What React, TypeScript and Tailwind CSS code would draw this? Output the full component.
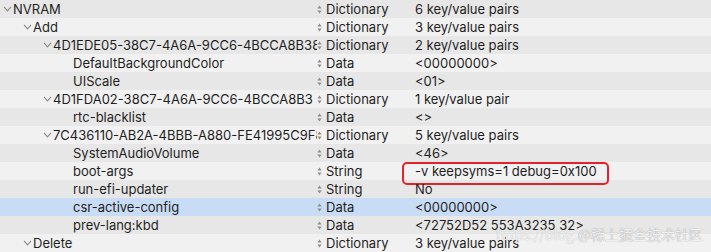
import React from 'react'

type Row = {
  level: number
  key: string
  type: string
  value: string
  open?: boolean
  selected?: boolean
  marked?: boolean
}

const rows: Row[] = [
  { level: 0, key: 'NVRAM', type: 'Dictionary', value: '6 key/value pairs', open: true },
  { level: 1, key: 'Add', type: 'Dictionary', value: '3 key/value pairs', open: true },
  { level: 2, key: '4D1EDE05-38C7-4A6A-9CC6-4BCCA8B38C14', type: 'Dictionary', value: '2 key/value pairs', open: true },
  { level: 3, key: 'DefaultBackgroundColor', type: 'Data', value: '<00000000>' },
  { level: 3, key: 'UIScale', type: 'Data', value: '<01>' },
  { level: 2, key: '4D1FDA02-38C7-4A6A-9CC6-4BCCA8B3', type: 'Dictionary', value: '1 key/value pair', open: true },
  { level: 3, key: 'rtc-blacklist', type: 'Data', value: '<>' },
  { level: 2, key: '7C436110-AB2A-4BBB-A880-FE41995C9F82', type: 'Dictionary', value: '5 key/value pairs', open: true },
  { level: 3, key: 'SystemAudioVolume', type: 'Data', value: '<46>' },
  { level: 3, key: 'boot-args', type: 'String', value: '-v keepsyms=1 debug=0x100', marked: true },
  { level: 3, key: 'run-efi-updater', type: 'String', value: 'No' },
  { level: 3, key: 'csr-active-config', type: 'Data', value: '<00000000>', selected: true },
  { level: 3, key: 'prev-lang:kbd', type: 'Data', value: '<72752D52 553A3235 32>' },
  { level: 1, key: 'Delete', type: 'Dictionary', value: '3 key/value pairs', open: true }
]

const indent = ['pl-[3px]', 'pl-[23px]', 'pl-[43px]', 'pl-[63px]']

function Chevron() {
  return (
    <svg width="10" height="6" viewBox="0 0 10 6" className="shrink-0">
      <path d="M1 0.8 L4.5 4.8 L8 0.8" fill="none" stroke="#8a8a8a" strokeWidth="1.1" />
    </svg>
  )
}

function Stepper() {
  return (
    <svg width="5" height="9" viewBox="0 0 5 9" className="shrink-0">
      <path d="M2.5 0.5 L4.6 3.6 L0.4 3.6 Z" fill="#8c8c8c" />
      <path d="M2.5 8.5 L4.6 5.4 L0.4 5.4 Z" fill="#8c8c8c" />
    </svg>
  )
}

function PlistRow({ row, index }: { row: Row; index: number }) {
  const bg = row.selected ? 'bg-[#c8ddf5]' : index % 2 === 0 ? 'bg-[#e7e7e7]' : 'bg-[#f1f1f1]'
  return (
    <div className={`${bg} flex h-[18px] items-center text-[13px] leading-[18px] text-[#1f1f1f]`}>
      <div className={`${indent[row.level]} flex w-[317px] shrink-0 items-center overflow-hidden whitespace-nowrap`}>
        {row.open ? <Chevron /> : <span className="w-[10px] shrink-0" />}
        <span>{row.key}</span>
      </div>
      <div className="flex w-[98px] shrink-0 items-center gap-[4px]">
        <Stepper />
        <span>{row.type}</span>
      </div>
      <div className="relative flex-1 whitespace-nowrap">
        {row.value}
        {row.marked && (
          <div className="absolute left-[-13px] top-[0px] h-[23px] w-[207px] rounded-[5px] border-2 border-[#e3222b]" />
        )}
      </div>
    </div>
  )
}

export default function App() {
  return (
    <div className="relative h-[252px] w-[711px] overflow-hidden bg-[#f1f1f1] font-['Inter','Liberation_Sans',sans-serif]">
      {rows.map((row, i) => (
        <PlistRow key={row.key + i} row={row} index={i} />
      ))}
      <div className="pointer-events-none absolute left-[496px] top-[226px] whitespace-nowrap font-['Noto_Sans_CJK_SC',sans-serif] text-[14px] leading-[16px]">
        <span className="text-[#ffffff]/75 [text-shadow:0_0_1px_#b0b0b0]">https://blog.</span>
        <span className="text-[#ffffff]/85 [text-shadow:0_0_1px_#7a7a7a]">@稀土掘金技术社区</span>
      </div>
    </div>
  )
}
